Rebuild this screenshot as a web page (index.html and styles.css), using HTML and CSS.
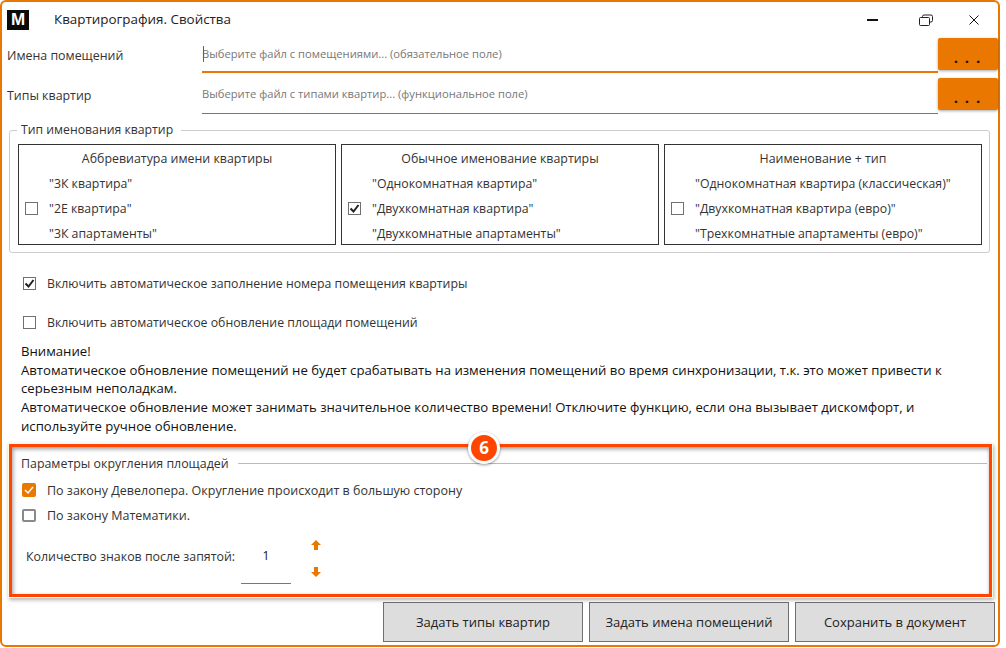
FILE: index.html
```html
<!DOCTYPE html>
<html lang="ru">
<head>
<meta charset="utf-8">
<title>Квартирография. Свойства</title>
<link rel="stylesheet" href="styles.css">
</head>
<body>
<div class="window">
  <header class="titlebar">
    <span class="logo">M</span>
    <span class="title">Квартирография. Свойства</span>
    <div class="controls">
      <svg class="ctl ctl-min" width="46" height="16" viewBox="0 0 46 16"><rect x="17" y="7" width="11" height="2" fill="#111"/></svg>
      <svg class="ctl ctl-max" width="46" height="16" viewBox="0 0 46 16"><path d="M18.500 5.500h8a1 1 0 0 1 1 1v6a1 1 0 0 1-1 1h-8a1 1 0 0 1-1-1v-6a1 1 0 0 1 1-1zM20.500 5.500v-1a1.500 1.500 0 0 1 1.500-1.500h7a1.500 1.500 0 0 1 1.500 1.500v4a1.500 1.500 0 0 1-1.500 1.500h-1.500" fill="none" stroke="#222" stroke-width="1"/></svg>
      <svg class="ctl ctl-close" width="46" height="16" viewBox="0 0 46 16"><path d="M18.500 3.500l9 9M27.500 3.500l-9 9" fill="none" stroke="#111" stroke-width="1"/></svg>
    </div>
  </header>

  <div class="file-row">
    <label class="file-label">Имена помещений</label>
    <div class="file-input file-input-active"><span class="caret"></span>Выберите файл с помещениями... (обязательное поле)</div>
    <button class="dots-btn">. . .</button>
  </div>
  <div class="file-row">
    <label class="file-label">Типы квартир</label>
    <div class="file-input">Выберите файл с типами квартир... (функциональное поле)</div>
    <button class="dots-btn">. . .</button>
  </div>

  <fieldset class="naming">
    <legend>Тип именования квартир</legend>
    <div class="naming-boxes">
      <div class="naming-box">
        <div class="naming-title">Аббревиатура имени квартиры</div>
        <div class="naming-body">
          <span class="check"></span>
          <div class="naming-lines">
            <div>"3К квартира"</div>
            <div>"2Е квартира"</div>
            <div>"3К апартаменты"</div>
          </div>
        </div>
      </div>
      <div class="naming-box">
        <div class="naming-title">Обычное именование квартиры</div>
        <div class="naming-body">
          <span class="check"><svg width="13" height="13" viewBox="0 0 13 13"><path d="M2.500 6.500l3 3 5-6.500" fill="none" stroke="#222" stroke-width="2"/></svg></span>
          <div class="naming-lines">
            <div>"Однокомнатная квартира"</div>
            <div>"Двухкомнатная квартира"</div>
            <div>"Двухкомнатные апартаменты"</div>
          </div>
        </div>
      </div>
      <div class="naming-box">
        <div class="naming-title">Наименование + тип</div>
        <div class="naming-body">
          <span class="check"></span>
          <div class="naming-lines">
            <div>"Однокомнатная квартира (классическая)"</div>
            <div>"Двухкомнатная квартира (евро)"</div>
            <div>"Трехкомнатные апартаменты (евро)"</div>
          </div>
        </div>
      </div>
    </div>
  </fieldset>

  <div class="option-row">
    <span class="check"><svg width="13" height="13" viewBox="0 0 13 13"><path d="M2.500 6.500l3 3 5-6.500" fill="none" stroke="#222" stroke-width="2"/></svg></span>
    <span>Включить автоматическое заполнение номера помещения квартиры</span>
  </div>
  <div class="option-row">
    <span class="check"></span>
    <span>Включить автоматическое обновление площади помещений</span>
  </div>

  <p class="notice">Внимание!<br>Автоматическое обновление помещений не будет срабатывать на изменения помещений во время синхронизации, т.к. это может привести к<br>серьезным неполадкам.<br>Автоматическое обновление может занимать значительное количество времени! Отключите функцию, если она вызывает дискомфорт, и<br>используйте ручное обновление.</p>

  <section class="rounding">
    <div class="rounding-head"><span>Параметры округления площадей</span><i class="rule"></i></div>
    <div class="round-option">
      <span class="check check-on"><svg width="14" height="14" viewBox="0 0 14 14"><path d="M3 7l3 3 5-6" fill="none" stroke="#fff" stroke-width="1.500"/></svg></span>
      <span>По закону Девелопера. Округление происходит в большую сторону</span>
    </div>
    <div class="round-option">
      <span class="check check-off"></span>
      <span>По закону Математики.</span>
    </div>
    <div class="count-row">
      <span class="count-label">Количество знаков после запятой:</span>
      <div class="count-input">1</div>
      <div class="spin">
        <svg width="12" height="12" viewBox="0 0 12 12"><path d="M6 1l5 5H8v5H4V6H1z" fill="#E97700"/></svg>
        <svg width="12" height="12" viewBox="0 0 12 12"><path d="M6 11l5-5H8V1H4v5H1z" fill="#E97700"/></svg>
      </div>
    </div>
  </section>

  <footer class="actions">
    <button class="action">Задать типы квартир</button>
    <button class="action">Задать имена помещений</button>
    <button class="action">Сохранить в документ</button>
  </footer>

  <div class="highlight"></div>
  <div class="badge">6</div>
</div>
</body>
</html>
```
FILE: styles.css
```css
* { box-sizing: border-box; }
html, body { margin: 0; padding: 0; background: #fff; }
body {
  width: 1006px;
  height: 648px;
  overflow: hidden;
  font-family: "Open Sans", "Noto Sans", sans-serif;
  font-size: 12.4px;
  color: #333;
}
.window {
  position: relative;
  width: 1000px;
  height: 647px;
  border: 2px solid #E97700;
  border-radius: 6px;
  display: flex;
  flex-direction: column;
  background: #fff;
}
.titlebar {
  height: 36px;
  display: flex;
  align-items: center;
  padding-left: 5px;
  flex: none;
}
.logo {
  width: 22px;
  height: 20px;
  background: #0b0b0b;
  color: #fff;
  font-family: "Liberation Sans", sans-serif;
  font-weight: 700;
  font-size: 17px;
  line-height: 20px;
  text-align: center;
}
.title { margin: -2px 0 0 25px; color: #222; font-size: 13.4px; }
.controls { margin-left: auto; display: flex; margin-right: 1px; }
.ctl { display: block; }
.ctl-min { margin-right: 6px; }
.ctl-max { margin-right: 3px; }
.file-row { display: flex; height: 40px; flex: none; }
.file-label { width: 200px; padding-left: 5px; font-size: 12.4px; line-height: 36px; }
.file-input {
  flex: 1;
  height: 36px;
  border-bottom: 1px solid #777;
  font-size: 11.2px;
  line-height: 32px;
  color: #777;
}
.file-input-active { height: 35px; border-bottom: 2px solid #E97700; }
.caret {
  display: inline-block;
  width: 1px;
  height: 16px;
  margin-right: -1px;
  background: #8a5a20;
  vertical-align: -4px;
  position: relative;
  left: 1px;
}
.dots-btn {
  width: 60px;
  height: 32px;
  border: 0;
  border-radius: 2px;
  background: #E97700;
  box-shadow: 0 1px 3px rgba(0,0,0,.35);
  font: 700 15px/38px "Open Sans", sans-serif;
  word-spacing: 3px;
  color: #111;
  padding: 0 2px 0 0;
}
.naming {
  margin: 4px 0 0 7px;
  width: 981px;
  height: 131px;
  flex: none;
  padding: 6px 7px 0 8px;
  border: 1px solid #ccc;
  border-radius: 3px;
  min-width: 0;
}
.naming legend { padding: 0 8px 0 4px; margin-left: -1px; font-size: 12.25px; line-height: 16px; }
.naming-boxes { display: flex; gap: 5px; }
.naming-box {
  width: 318px;
  height: 101px;
  border: 1px solid #333;
  padding-top: 1px;
  font-size: 12.4px;
}
.naming-title { height: 25px; line-height: 25px; text-align: center; }
.naming-body { display: flex; align-items: center; height: 75px; padding-left: 6px; }
.naming-lines { margin-left: 11px; font-size: 12.3px; }
.naming-lines div { height: 25px; line-height: 25px; white-space: nowrap; }
.check {
  flex: none;
  display: block;
  width: 13px;
  height: 13px;
  border: 1px solid #707070;
  background: #fff;
  position: relative;
}
.check svg { position: absolute; left: -1px; top: -1px; display: block; }
.option-row {
  display: flex;
  align-items: center;
  height: 39px;
  flex: none;
  padding-left: 21px;
  gap: 11px;
  font-size: 12.3px;
}
.naming + .option-row { margin-top: 11px; }
.notice {
  margin: 0 0 0 19px;
  font-size: 13.15px;
  line-height: 18.7px;
  color: #111;
  white-space: nowrap;
  flex: none;
}
.rounding { margin: 20px 0 0 19px; flex: none; }
.rounding-head { display: flex; align-items: center; height: 16px; margin-bottom: 6px; gap: 9px; }
.rule { display: block; height: 1px; width: 749px; background: #bbb; }
.round-option {
  display: flex;
  align-items: center;
  height: 25px;
  margin-left: 1px;
  gap: 11px;
  font-size: 12.5px;
}
.check-on { width: 14px; height: 14px; background: #E97700; border: 0; border-radius: 2px; }
.check-on svg { left: 0; top: 0; }
.check-off { width: 14px; height: 13px; border: 2px solid #8a8a8a; border-radius: 2px; }
.count-row { display: flex; height: 51px; margin: 5px 0 0 5px; }
.count-label { width: 215px; line-height: 48px; white-space: nowrap; }
.count-input {
  width: 50px;
  height: 51px;
  border-bottom: 1px solid #777;
  text-align: center;
  line-height: 46px;
  color: #111;
  font-size: 12px;
}
.spin {
  margin-left: 19px;
  padding-top: 6px;
  display: flex;
  flex-direction: column;
  gap: 15px;
}
.spin svg { display: block; }
.actions {
  margin: auto 3px 3px 0;
  display: flex;
  justify-content: flex-end;
  gap: 6px;
}
.action {
  width: 200px;
  height: 40px;
  border: 1px solid #707070;
  background: #ddd;
  font: 13px "Open Sans", sans-serif;
  color: #222;
  padding: 0;
}
.highlight {
  position: absolute;
  left: 7px;
  top: 442px;
  width: 983px;
  height: 153px;
  border: 3px solid #FF4500;
  outline: 1px solid #fffbe0;
  box-shadow: 1px 2px 4px 1px rgba(0,0,0,.3), inset 1px 2px 4px 0 rgba(0,0,0,.4);
  pointer-events: none;
}
.badge {
  position: absolute;
  left: 466px;
  top: 430px;
  width: 32px;
  height: 32px;
  border-radius: 50%;
  border: 3px solid #fff;
  background: #FF4500;
  box-shadow: 0 1px 3px rgba(0,0,0,.4);
  color: #fff;
  font: 700 17px/26px "Open Sans", sans-serif;
  text-align: center;
}
```
